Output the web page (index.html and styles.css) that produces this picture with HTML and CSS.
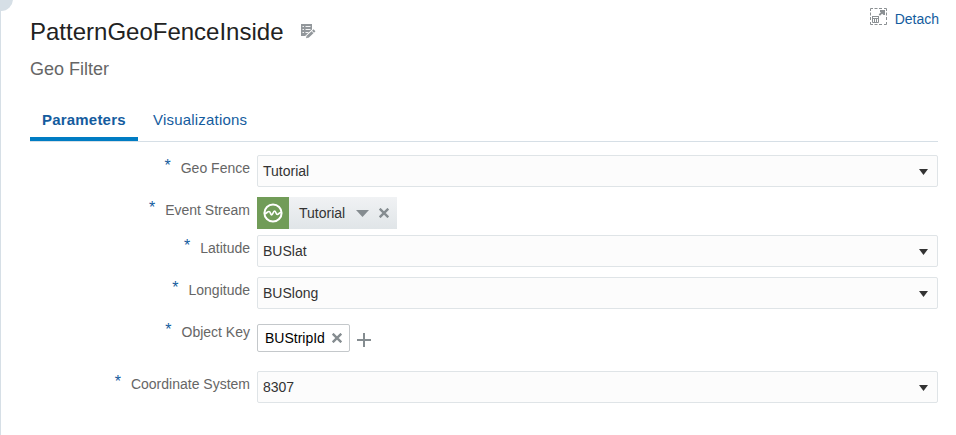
FILE: index.html
```html
<!DOCTYPE html>
<html lang="en">
<head>
<meta charset="utf-8">
<title>PatternGeoFenceInside</title>
<link rel="stylesheet" href="styles.css">
</head>
<body>
<span class="corner"></span>
<main class="panel">
  <header class="header">
    <div class="heading">
      <h1 class="title">PatternGeoFenceInside</h1>
      <svg class="edit" width="15" height="15" viewBox="0 0 15 15">
        <path fill="#92979b" d="M0 0h11v6L5 12H0z"/>
        <path stroke="#fff" stroke-width=".9" d="M1.500 2.500h1.500M1.500 5.500h1.500M1.500 8.500h1.500M4.500 2.500h5M4.500 5.500h5M4.500 8.500h3"/>
        <path stroke="#fff" stroke-width="4" d="M5.500 13.500l8-7.500"/>
        <path stroke="#92979b" stroke-width="2.800" d="M6.700 12.700l4.800-4.500M12 7.700l1.500-1.400"/>
        <path fill="#92979b" d="M5 14.300l.7-2.900 2.200 2.200z"/>
      </svg>
    </div>
    <a class="detach">
      <svg width="17" height="17" viewBox="0 0 17 17" fill="none" stroke="#8b9093">
        <path d="M.5 3V.5H3M4.500 .5h3M9 .5h3M14 .5h2.500V3M16.500 4.500v3M16.500 9v3M16.500 14v2.500H14M12 16.500H9M7.500 16.500h-3M3 16.500H.5V14M.5 12V9M.5 7.500v-3"/>
        <path d="M2 8.500h7M2.500 8v6.500h6V8M2.500 10.500h6M4.500 10.500v4M6.500 10.500v4"/>
        <path stroke-width="1.800" d="M9.300 7.200L13 3.500"/>
        <path fill="#8b9093" stroke="none" d="M10 2h5v5h-1.500L10 3.500z"/>
      </svg>
      <span>Detach</span>
    </a>
  </header>
  <p class="subtitle">Geo Filter</p>
  <nav class="tabs">
    <a class="tab active">Parameters</a>
    <a class="tab">Visualizations</a>
  </nav>
  <form class="form">
    <div class="row">
      <label class="label"><b>*</b><span>Geo Fence</span></label>
      <div class="select"><span>Tutorial</span><svg width="9" height="6"><path d="M0 0h9L4.500 6z"/></svg></div>
    </div>
    <div class="row short">
      <label class="label"><b>*</b><span>Event Stream</span></label>
      <div class="stream">
        <span class="stream-icon"><svg width="20" height="20" viewBox="0 0 20 20" fill="none" stroke="#fff"><circle cx="10" cy="10" r="8.600" stroke-width="2"/><path stroke-width="1.700" d="M2 10.500C3.500 10.500 4.500 8.500 6 8.500S7.500 12 8.700 12 10.200 8 11.500 8s1.500 3.500 2.800 3.500S16 9.500 18 9.500"/></svg></span>
        <span class="stream-name">Tutorial</span>
        <svg class="down" width="13" height="7"><path d="M0 0h13L6.500 7z"/></svg>
        <svg class="close" width="10" height="10"><path d="M.7.7l8.600 8.600M9.300.7L.7 9.300"/></svg>
      </div>
    </div>
    <div class="row">
      <label class="label"><b>*</b><span>Latitude</span></label>
      <div class="select"><span>BUSlat</span><svg width="9" height="6"><path d="M0 0h9L4.500 6z"/></svg></div>
    </div>
    <div class="row">
      <label class="label"><b>*</b><span>Longitude</span></label>
      <div class="select"><span>BUSlong</span><svg width="9" height="6"><path d="M0 0h9L4.500 6z"/></svg></div>
    </div>
    <div class="row tall">
      <label class="label"><b>*</b><span>Object Key</span></label>
      <div class="keys">
        <span class="key">BUStripId<svg class="close" width="10" height="10"><path d="M.7.7l8.600 8.600M9.300.7L.7 9.300"/></svg></span>
        <svg class="plus" width="14" height="14"><path d="M7 0v14M0 7h14"/></svg>
      </div>
    </div>
    <div class="row">
      <label class="label"><b>*</b><span>Coordinate System</span></label>
      <div class="select"><span>8307</span><svg width="9" height="6"><path d="M0 0h9L4.500 6z"/></svg></div>
    </div>
  </form>
</main>
</body>
</html>
```
FILE: styles.css
```css
* { box-sizing: border-box; }
body {
  margin: 0;
  height: 435px;
  overflow: hidden;
  background: #fff;
  color: #333;
  font: 14px/20px "Liberation Sans", Arial, sans-serif;
}
svg { display: block; flex: none; }
.corner {
  position: absolute;
  left: -11px;
  top: -13px;
  width: 24px;
  height: 24px;
  border-radius: 50%;
  background: #d6dfe6;
}
.panel {
  height: 435px;
  border-left: 1px solid #d6dfe6;
  padding: 0 18px 0 29px;
}
.header { display: flex; justify-content: space-between; height: 56px; }
.heading { display: flex; align-items: flex-start; padding-top: 17px; }
.title {
  margin: 0;
  font-size: 24px;
  line-height: 30px;
  font-weight: 400;
  color: #222;
}
.edit { margin: 7px 0 0 17px; }
.detach {
  display: flex;
  gap: 8px;
  padding-top: 8px;
  margin-right: -1px;
  color: #145c9e;
}
.detach span { padding-top: 1px; }
.subtitle {
  margin: 0;
  height: 44px;
  font-size: 18px;
  line-height: 26px;
  color: #666;
}
.tabs {
  display: flex;
  height: 42px;
  border-bottom: 1px solid #d6dfe6;
  font-size: 15px;
  letter-spacing: .2px;
  color: #145c9e;
}
.tab { padding: 10px 12px 0; height: 37px; }
.tab.active {
  width: 108px;
  height: 41px;
  margin-right: 3px;
  border-bottom: 4px solid #007cc3;
  font-weight: 700;
}
.form { padding-top: 13px; }
.row { display: flex; height: 42px; }
.row.short { height: 38px; }
.row.tall { height: 52px; }
.label {
  display: flex;
  justify-content: flex-end;
  width: 220px;
  margin-right: 7px;
  padding-top: 3px;
  color: #666;
}
.label b {
  margin-right: 10px;
  font-weight: 400;
  font-size: 16px;
  line-height: 16px;
  color: #145c9e;
}
.select {
  flex: 1;
  display: flex;
  align-items: center;
  justify-content: space-between;
  height: 32px;
  padding: 0 9px 0 5px;
  border: 1px solid #dfe4e7;
  border-radius: 2px;
  background: #fcfcfc;
}
.select svg { fill: #333; margin-top: 2px; }
.stream {
  display: flex;
  align-items: center;
  width: 140px;
  height: 32px;
  background: linear-gradient(#f0f2f4, #e0e5e8);
}
.stream-icon { width: 32px; height: 32px; padding: 6px; background: #719c58; }
.stream-name { width: 57px; padding-left: 10px; }
.down { margin: 1px 10px 0 10px; fill: #858c90; }
.close { fill: none; stroke: #858c90; stroke-width: 2.400; }
.keys { display: flex; align-items: flex-start; padding-top: 5px; }
.key {
  display: flex;
  align-items: center;
  justify-content: space-between;
  width: 93px;
  height: 28px;
  padding: 0 7px;
  border: 1px solid #c4c8cb;
  border-radius: 2px;
  color: #000;
}
.plus { margin: 9px 0 0 7px; stroke: #858c90; stroke-width: 2; }
```
